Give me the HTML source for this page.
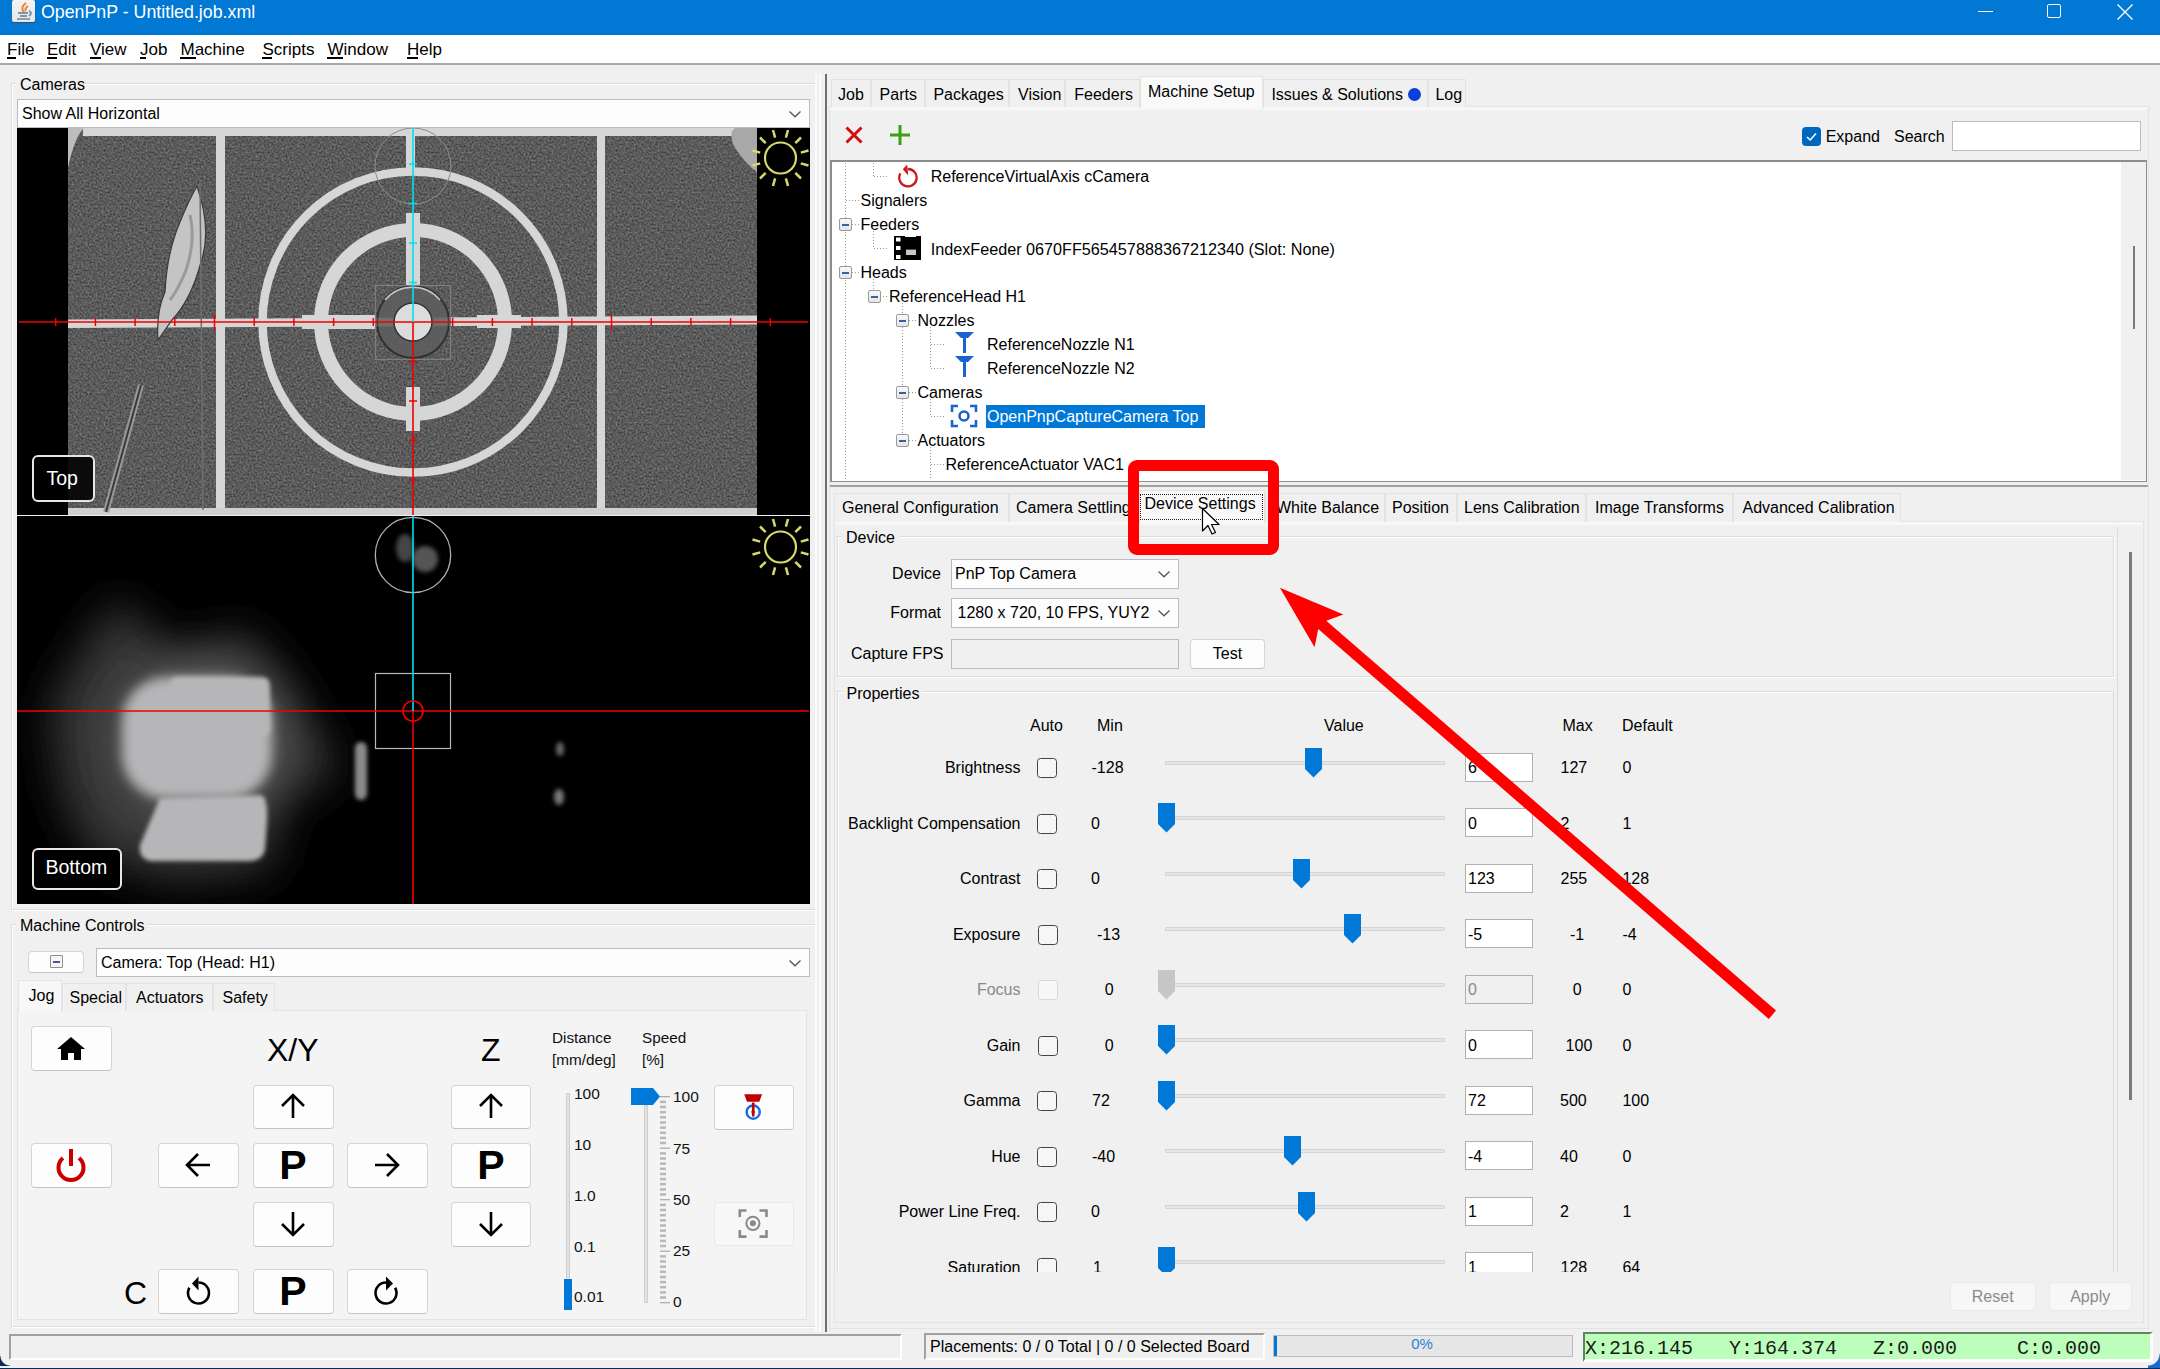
<!DOCTYPE html>
<html><head><meta charset="utf-8"><title>OpenPnP</title>
<style>
html,body{margin:0;padding:0;width:2160px;height:1369px;overflow:hidden;background:#0b2a55;}
#root{position:relative;width:2160px;height:1369px;overflow:hidden;font-family:"Liberation Sans",sans-serif;}
#root>div,#root>svg{position:absolute;box-sizing:border-box;}
</style></head><body><div id="root">
<div style="left:0px;top:0px;width:2160px;height:35px;background:#0078d4;"></div>
<div style="left:12px;top:0px;width:23px;height:22px;background:linear-gradient(#f4f4f4,#e6e6e6);border-radius:2px;box-shadow:0 1px 1px #3a4a5a;"></div>
<svg style="left:12px;top:0px;" width="24" height="22" viewBox="0 0 24 22"><path d="M14 3 C10 6 9 9 12 12 M16 6 C13 8 13 10 14 11" stroke="#e8882a" stroke-width="2" fill="none"/><rect x="6" y="12" width="10" height="2" fill="#7d95ab"/><rect x="8" y="15" width="7" height="2" fill="#7d95ab"/><rect x="5" y="18" width="13" height="2" fill="#8aa0b4"/><path d="M17 11 q4 2 0 5" stroke="#7d95ab" stroke-width="2" fill="none"/></svg>
<div style="left:41px;top:3.93px;font-size:17.8px;line-height:17.8px;color:#fff;font-weight:normal;font-family:'Liberation Sans',sans-serif;white-space:pre;">OpenPnP - Untitled.job.xml</div>
<div style="left:1978px;top:11px;width:15px;height:1px;background:#fff;"></div>
<div style="left:2047px;top:4px;width:14px;height:14px;border:1.3px solid #fff;border-radius:2px;box-sizing:border-box;"></div>
<svg style="left:2116px;top:3px;" width="18" height="18" viewBox="0 0 18 18"><path d="M1.5 1.5 L16.5 16.5 M16.5 1.5 L1.5 16.5" stroke="#fff" stroke-width="1.4"/></svg>
<div style="left:0px;top:35px;width:2160px;height:29px;background:#fff;"></div>
<div style="left:0px;top:63px;width:2160px;height:2px;background:#a9a9a9;"></div>
<div style="left:7px;top:40.61px;font-size:17px;line-height:17px;color:#000;font-weight:normal;font-family:'Liberation Sans',sans-serif;white-space:pre;">File</div>
<div style="left:6.5px;top:57px;width:9px;height:2px;background:#000;"></div>
<div style="left:47px;top:40.61px;font-size:17px;line-height:17px;color:#000;font-weight:normal;font-family:'Liberation Sans',sans-serif;white-space:pre;">Edit</div>
<div style="left:46.5px;top:57px;width:10px;height:2px;background:#000;"></div>
<div style="left:90px;top:40.61px;font-size:17px;line-height:17px;color:#000;font-weight:normal;font-family:'Liberation Sans',sans-serif;white-space:pre;">View</div>
<div style="left:89.5px;top:57px;width:11px;height:2px;background:#000;"></div>
<div style="left:140px;top:40.61px;font-size:17px;line-height:17px;color:#000;font-weight:normal;font-family:'Liberation Sans',sans-serif;white-space:pre;">Job</div>
<div style="left:139.5px;top:57px;width:6px;height:2px;background:#000;"></div>
<div style="left:180.5px;top:40.61px;font-size:17px;line-height:17px;color:#000;font-weight:normal;font-family:'Liberation Sans',sans-serif;white-space:pre;">Machine</div>
<div style="left:180.0px;top:57px;width:16px;height:2px;background:#000;"></div>
<div style="left:262.5px;top:40.61px;font-size:17px;line-height:17px;color:#000;font-weight:normal;font-family:'Liberation Sans',sans-serif;white-space:pre;">Scripts</div>
<div style="left:262.0px;top:57px;width:10px;height:2px;background:#000;"></div>
<div style="left:327.5px;top:40.61px;font-size:17px;line-height:17px;color:#000;font-weight:normal;font-family:'Liberation Sans',sans-serif;white-space:pre;">Window</div>
<div style="left:327.0px;top:57px;width:16px;height:2px;background:#000;"></div>
<div style="left:407px;top:40.61px;font-size:17px;line-height:17px;color:#000;font-weight:normal;font-family:'Liberation Sans',sans-serif;white-space:pre;">Help</div>
<div style="left:406.5px;top:57px;width:11px;height:2px;background:#000;"></div>
<div style="left:0px;top:65px;width:2160px;height:1304px;background:#f0f0f0;"></div>
<div style="left:11px;top:83px;width:805px;height:827px;border:1px solid #dcdcdc;box-shadow:1px 1px 0 #fff inset, 1px 1px 0 #fff;"></div>
<div style="left:16px;top:80px;width:68px;height:6px;background:#f0f0f0;"></div>
<div style="left:20px;top:77.46px;font-size:16px;line-height:16px;color:#000;font-weight:normal;font-family:'Liberation Sans',sans-serif;white-space:pre;">Cameras</div>
<div style="left:17px;top:99px;width:793px;height:29px;background:#fdfdfd;border:1px solid #b9bcc2;"></div>
<div style="left:22px;top:106.46px;font-size:16px;line-height:16px;color:#000;font-weight:normal;font-family:'Liberation Sans',sans-serif;white-space:pre;">Show All Horizontal</div>
<svg style="left:788px;top:109.5px;" width="14" height="9" viewBox="0 0 14 9"><path d="M1.5 1.5 L7 6.8 L12.5 1.5" stroke="#555" stroke-width="1.3" fill="none"/></svg>
<svg style="left:17px;top:128px;" width="793" height="387" viewBox="0 0 793 387"><defs>
<filter id="noise" x="0" y="0" width="100%" height="100%" color-interpolation-filters="sRGB"><feTurbulence type="fractalNoise" baseFrequency="0.5" numOctaves="2" seed="7"/><feColorMatrix type="matrix" values="0.4 0 0 0 0.155  0.4 0 0 0 0.155  0.4 0 0 0 0.155  0 0 0 0 1"/></filter>
</defs>
<rect x="0" y="0" width="793" height="387" fill="#000"/>
<rect x="51" y="0" width="689" height="387" fill="#5a5a5a"/>
<g transform="translate(-17,-128)">
<rect x="68" y="128" width="689" height="387" fill="#5a5a5a" filter="url(#noise)"/>
<rect x="83" y="128" width="662" height="8" fill="#d6d6d6"/>
<path d="M68 128 h16 q-10 10 -16 40 z" fill="#bdbdbd"/>
<path d="M757 128 h-22 q-6 4 -2 16 q10 18 24 28 z" fill="#a8a8a8"/>
<rect x="216" y="134" width="9" height="376" fill="#d6d6d6"/>
<rect x="597" y="134" width="8" height="376" fill="#d6d6d6"/>
<polygon points="68,319.5 757,315.5 757,324.5 68,328" fill="#d6d6d6"/>
<rect x="68" y="508" width="689" height="7" fill="#cfcfcf"/>
<circle cx="413" cy="322" r="150.5" stroke="#d6d6d6" stroke-width="8.5" fill="none"/>
<rect x="406" y="128" width="9" height="40" fill="#d6d6d6"/>
<circle cx="413" cy="322" r="92" stroke="#d6d6d6" stroke-width="14" fill="none"/>
<circle cx="413" cy="322" r="139" fill="none"/>
<rect x="302" y="315" width="73" height="14" fill="#d6d6d6"/>
<rect x="477" y="315" width="44" height="13" fill="#d6d6d6"/>
<rect x="406" y="213" width="14" height="72" fill="#d6d6d6"/>
<rect x="406" y="387" width="14" height="44" fill="#d6d6d6"/>
<circle cx="413" cy="322" r="36" fill="#5e5e5e" stroke="#2a2a2a" stroke-width="2" opacity="0.85"/><path d="M385 300 A36 36 0 0 1 440 300" stroke="#c8c8c8" stroke-width="1.5" fill="none"/>
<circle cx="413" cy="322" r="19" fill="#dcdcdc" stroke="#333" stroke-width="1.5"/>
<path d="M197 186 Q212 230 201 262 Q191 300 172 320 L158 340 Q156 312 165 292 Q167 252 180 222 Q189 200 197 186 Z" fill="#c4c4c4" stroke="#3a3a3a" stroke-width="1.2"/><path d="M190 215 Q196 240 186 270 Q178 290 170 300" stroke="#9a9a9a" stroke-width="3" fill="none"/><line x1="200" y1="180" x2="203" y2="510" stroke="#6e6e6e" stroke-width="1.5"/>
<line x1="141" y1="385" x2="106" y2="512" stroke="#9a9a9a" stroke-width="6"/><line x1="141" y1="385" x2="106" y2="512" stroke="#3a3a3a" stroke-width="2"/>
<rect x="375.5" y="285.5" width="75" height="74" stroke="#7e7e7e" stroke-width="1.2" fill="none"/>
<circle cx="413" cy="166" r="38" stroke="#8c8c8c" stroke-width="1" fill="none"/>
<line x1="19" y1="322" x2="808" y2="322" stroke="#f00000" stroke-width="1.6"/>
<line x1="55.7" y1="318" x2="55.7" y2="326" stroke="#f00000" stroke-width="1.5"/><line x1="95.4" y1="318" x2="95.4" y2="326" stroke="#f00000" stroke-width="1.5"/><line x1="135.1" y1="318" x2="135.1" y2="326" stroke="#f00000" stroke-width="1.5"/><line x1="174.8" y1="318" x2="174.8" y2="326" stroke="#f00000" stroke-width="1.5"/><line x1="214.5" y1="314" x2="214.5" y2="330" stroke="#f00000" stroke-width="1.5"/><line x1="254.2" y1="318" x2="254.2" y2="326" stroke="#f00000" stroke-width="1.5"/><line x1="293.9" y1="318" x2="293.9" y2="326" stroke="#f00000" stroke-width="1.5"/><line x1="333.6" y1="318" x2="333.6" y2="326" stroke="#f00000" stroke-width="1.5"/><line x1="373.3" y1="318" x2="373.3" y2="326" stroke="#f00000" stroke-width="1.5"/><line x1="452.7" y1="318" x2="452.7" y2="326" stroke="#f00000" stroke-width="1.5"/><line x1="492.4" y1="318" x2="492.4" y2="326" stroke="#f00000" stroke-width="1.5"/><line x1="532.1" y1="318" x2="532.1" y2="326" stroke="#f00000" stroke-width="1.5"/><line x1="571.8" y1="318" x2="571.8" y2="326" stroke="#f00000" stroke-width="1.5"/><line x1="611.5" y1="314" x2="611.5" y2="330" stroke="#f00000" stroke-width="1.5"/><line x1="651.2" y1="318" x2="651.2" y2="326" stroke="#f00000" stroke-width="1.5"/><line x1="690.9" y1="318" x2="690.9" y2="326" stroke="#f00000" stroke-width="1.5"/><line x1="730.6" y1="318" x2="730.6" y2="326" stroke="#f00000" stroke-width="1.5"/><line x1="770.3" y1="318" x2="770.3" y2="326" stroke="#f00000" stroke-width="1.5"/>
<line x1="413" y1="128" x2="413" y2="322" stroke="#00e0f0" stroke-width="1.6"/>
<line x1="413" y1="322" x2="413" y2="515" stroke="#f00000" stroke-width="1.6"/>
<line x1="409" y1="282.5" x2="417" y2="282.5" stroke="#00e0f0" stroke-width="1.5"/><line x1="409" y1="361.5" x2="417" y2="361.5" stroke="#f00000" stroke-width="1.5"/><line x1="409" y1="243.0" x2="417" y2="243.0" stroke="#00e0f0" stroke-width="1.5"/><line x1="409" y1="401.0" x2="417" y2="401.0" stroke="#f00000" stroke-width="1.5"/><line x1="409" y1="203.5" x2="417" y2="203.5" stroke="#00e0f0" stroke-width="1.5"/><line x1="409" y1="440.5" x2="417" y2="440.5" stroke="#f00000" stroke-width="1.5"/><line x1="409" y1="164.0" x2="417" y2="164.0" stroke="#00e0f0" stroke-width="1.5"/><line x1="409" y1="480.0" x2="417" y2="480.0" stroke="#f00000" stroke-width="1.5"/><circle cx="780.5" cy="158" r="15.5" stroke="#d9d96a" stroke-width="2.2" fill="none"/><line x1="800.8" y1="163.4" x2="808.5" y2="165.5" stroke="#d9d96a" stroke-width="2.5"/><line x1="795.3" y1="172.8" x2="801.0" y2="178.5" stroke="#d9d96a" stroke-width="2.5"/><line x1="785.9" y1="178.3" x2="788.0" y2="186.0" stroke="#d9d96a" stroke-width="2.5"/><line x1="775.1" y1="178.3" x2="773.0" y2="186.0" stroke="#d9d96a" stroke-width="2.5"/><line x1="765.7" y1="172.8" x2="760.0" y2="178.5" stroke="#d9d96a" stroke-width="2.5"/><line x1="760.2" y1="163.4" x2="752.5" y2="165.5" stroke="#d9d96a" stroke-width="2.5"/><line x1="760.2" y1="152.6" x2="752.5" y2="150.5" stroke="#d9d96a" stroke-width="2.5"/><line x1="765.7" y1="143.2" x2="760.0" y2="137.5" stroke="#d9d96a" stroke-width="2.5"/><line x1="775.1" y1="137.7" x2="773.0" y2="130.0" stroke="#d9d96a" stroke-width="2.5"/><line x1="785.9" y1="137.7" x2="788.0" y2="130.0" stroke="#d9d96a" stroke-width="2.5"/><line x1="795.3" y1="143.2" x2="801.0" y2="137.5" stroke="#d9d96a" stroke-width="2.5"/><line x1="800.8" y1="152.6" x2="808.5" y2="150.5" stroke="#d9d96a" stroke-width="2.5"/></g></svg>
<div style="left:32px;top:455px;width:63px;height:47px;border:2px solid #e6e6e6;border-radius:6px;background:rgba(0,0,0,0.88);"></div>
<div style="left:46.5px;top:468.99px;font-size:19.5px;line-height:19.5px;color:#fff;font-weight:normal;font-family:'Liberation Sans',sans-serif;white-space:pre;">Top</div>
<svg style="left:17px;top:516px;" width="793" height="388" viewBox="0 0 793 388"><defs>
<filter id="blur1" x="-50%" y="-50%" width="200%" height="200%"><feGaussianBlur stdDeviation="22"/></filter>
<filter id="blur2" x="-50%" y="-50%" width="200%" height="200%"><feGaussianBlur stdDeviation="6"/></filter>
<filter id="blur3" x="-50%" y="-50%" width="200%" height="200%"><feGaussianBlur stdDeviation="2"/></filter>
</defs>
<rect x="0" y="0" width="793" height="388" fill="#000"/>
<g transform="translate(-17,-516)">
<path d="M116 600 L180 655 L240 630 L280 670 L310 720 L340 771 L285 800 L268 870 L170 880 L90 855 L60 790 L50 705 L80 655 Z" fill="#383838" filter="url(#blur1)"/>
<ellipse cx="200" cy="740" rx="85" ry="80" fill="#585858" filter="url(#blur1)"/>
<rect x="122" y="677" width="150" height="122" rx="45" fill="#b6b6b8" filter="url(#blur2)"/>
<rect x="170" y="677" width="100" height="60" rx="8" fill="#b6b6b8" filter="url(#blur3)"/>
<path d="M160 798 L262 795 Q268 800 267 820 L265 850 Q262 861 250 861 L150 861 Q138 858 140 845 Z" fill="#b6b6b8" filter="url(#blur3)"/>
<rect x="355" y="742" width="12" height="58" rx="6" fill="#8a8a8a" filter="url(#blur3)"/>
<ellipse cx="560" cy="749" rx="4" ry="7" fill="#666" filter="url(#blur3)"/>
<ellipse cx="559" cy="797" rx="5" ry="8" fill="#777" filter="url(#blur3)"/>
<ellipse cx="405" cy="548" rx="9" ry="14" fill="#444" filter="url(#blur3)"/>
<ellipse cx="425" cy="559" rx="13" ry="13" fill="#555" filter="url(#blur3)"/>
<circle cx="413" cy="555" r="37.7" stroke="#b0b0b0" stroke-width="1.3" fill="none"/>
<rect x="375.5" y="673.5" width="75" height="75" stroke="#b8b8b8" stroke-width="1.2" fill="none"/>
<line x1="17" y1="711" x2="809" y2="711" stroke="#f00000" stroke-width="1.6"/>
<line x1="413" y1="516" x2="413" y2="711" stroke="#00e0f0" stroke-width="1.6"/>
<line x1="413" y1="711" x2="413" y2="904" stroke="#f00000" stroke-width="1.6"/>
<circle cx="413" cy="711" r="10" stroke="#f00000" stroke-width="1.6" fill="none"/>
<circle cx="780.5" cy="547" r="15.5" stroke="#d9d96a" stroke-width="2.2" fill="none"/><line x1="800.8" y1="552.4" x2="808.5" y2="554.5" stroke="#d9d96a" stroke-width="2.5"/><line x1="795.3" y1="561.8" x2="801.0" y2="567.5" stroke="#d9d96a" stroke-width="2.5"/><line x1="785.9" y1="567.3" x2="788.0" y2="575.0" stroke="#d9d96a" stroke-width="2.5"/><line x1="775.1" y1="567.3" x2="773.0" y2="575.0" stroke="#d9d96a" stroke-width="2.5"/><line x1="765.7" y1="561.8" x2="760.0" y2="567.5" stroke="#d9d96a" stroke-width="2.5"/><line x1="760.2" y1="552.4" x2="752.5" y2="554.5" stroke="#d9d96a" stroke-width="2.5"/><line x1="760.2" y1="541.6" x2="752.5" y2="539.5" stroke="#d9d96a" stroke-width="2.5"/><line x1="765.7" y1="532.2" x2="760.0" y2="526.5" stroke="#d9d96a" stroke-width="2.5"/><line x1="775.1" y1="526.7" x2="773.0" y2="519.0" stroke="#d9d96a" stroke-width="2.5"/><line x1="785.9" y1="526.7" x2="788.0" y2="519.0" stroke="#d9d96a" stroke-width="2.5"/><line x1="795.3" y1="532.2" x2="801.0" y2="526.5" stroke="#d9d96a" stroke-width="2.5"/><line x1="800.8" y1="541.6" x2="808.5" y2="539.5" stroke="#d9d96a" stroke-width="2.5"/>
</g></svg>
<div style="left:31.5px;top:848px;width:90px;height:42px;border:2px solid #e6e6e6;border-radius:6px;background:#000;"></div>
<div style="left:45.5px;top:858.49px;font-size:19.5px;line-height:19.5px;color:#fff;font-weight:normal;font-family:'Liberation Sans',sans-serif;white-space:pre;">Bottom</div>
<div style="left:11px;top:924px;width:805px;height:403px;border:1px solid #dcdcdc;box-shadow:1px 1px 0 #fff inset, 1px 1px 0 #fff;"></div>
<div style="left:16px;top:921px;width:131px;height:6px;background:#f0f0f0;"></div>
<div style="left:20px;top:918.46px;font-size:16px;line-height:16px;color:#000;font-weight:normal;font-family:'Liberation Sans',sans-serif;white-space:pre;">Machine Controls</div>
<div style="left:28px;top:951px;width:56px;height:22px;background:#fdfdfd;border:1px solid #d5d5d5;border-bottom-color:#c4c4c4;border-radius:4px;"></div>
<div style="left:50px;top:955px;width:13px;height:13px;border:1px solid #8e8e8e;border-radius:1px;background:#f6f6f6;"></div>
<div style="left:53px;top:961px;width:7px;height:1.5px;background:#4a5a8a;"></div>
<div style="left:96px;top:948px;width:714px;height:29px;background:#fdfdfd;border:1px solid #b9bcc2;"></div>
<div style="left:101px;top:954.96px;font-size:16px;line-height:16px;color:#000;font-weight:normal;font-family:'Liberation Sans',sans-serif;white-space:pre;">Camera: Top (Head: H1)</div>
<svg style="left:788px;top:958.5px;" width="14" height="9" viewBox="0 0 14 9"><path d="M1.5 1.5 L7 6.8 L12.5 1.5" stroke="#555" stroke-width="1.3" fill="none"/></svg>
<div style="left:17px;top:1010px;width:790px;height:310px;background:#f4f4f4;border:1px solid #e3e3e3;"></div>
<div style="left:62px;top:983px;width:64px;height:28px;background:#f0f0f0;border:1px solid #e3e3e3;border-bottom:none;"></div>
<div style="left:69.5px;top:989.96px;font-size:16px;line-height:16px;color:#000;font-weight:normal;font-family:'Liberation Sans',sans-serif;white-space:pre;">Special</div>
<div style="left:126px;top:983px;width:87px;height:28px;background:#f0f0f0;border:1px solid #e3e3e3;border-bottom:none;"></div>
<div style="left:136px;top:989.96px;font-size:16px;line-height:16px;color:#000;font-weight:normal;font-family:'Liberation Sans',sans-serif;white-space:pre;">Actuators</div>
<div style="left:213px;top:983px;width:62px;height:28px;background:#f0f0f0;border:1px solid #e3e3e3;border-bottom:none;"></div>
<div style="left:222.5px;top:989.96px;font-size:16px;line-height:16px;color:#000;font-weight:normal;font-family:'Liberation Sans',sans-serif;white-space:pre;">Safety</div>
<div style="left:18px;top:980px;width:44px;height:32px;background:#f7f7f7;border:1px solid #e3e3e3;border-bottom:none;"></div>
<div style="left:28.5px;top:988.46px;font-size:16px;line-height:16px;color:#000;font-weight:normal;font-family:'Liberation Sans',sans-serif;white-space:pre;">Jog</div>
<div style="left:30.5px;top:1026px;width:81.0px;height:45px;background:#fdfdfd;border:1px solid #d5d5d5;border-bottom-color:#c4c4c4;border-radius:4px;"></div>
<div style="left:253px;top:1085px;width:80.5px;height:44px;background:#fdfdfd;border:1px solid #d5d5d5;border-bottom-color:#c4c4c4;border-radius:4px;"></div>
<div style="left:451px;top:1085px;width:80px;height:44px;background:#fdfdfd;border:1px solid #d5d5d5;border-bottom-color:#c4c4c4;border-radius:4px;"></div>
<div style="left:30.5px;top:1143px;width:81.0px;height:45px;background:#fdfdfd;border:1px solid #d5d5d5;border-bottom-color:#c4c4c4;border-radius:4px;"></div>
<div style="left:158px;top:1143px;width:81px;height:45px;background:#fdfdfd;border:1px solid #d5d5d5;border-bottom-color:#c4c4c4;border-radius:4px;"></div>
<div style="left:253px;top:1143px;width:80.5px;height:45px;background:#fdfdfd;border:1px solid #d5d5d5;border-bottom-color:#c4c4c4;border-radius:4px;"></div>
<div style="left:347px;top:1143px;width:81px;height:45px;background:#fdfdfd;border:1px solid #d5d5d5;border-bottom-color:#c4c4c4;border-radius:4px;"></div>
<div style="left:451px;top:1143px;width:80px;height:45px;background:#fdfdfd;border:1px solid #d5d5d5;border-bottom-color:#c4c4c4;border-radius:4px;"></div>
<div style="left:253px;top:1202px;width:80.5px;height:45px;background:#fdfdfd;border:1px solid #d5d5d5;border-bottom-color:#c4c4c4;border-radius:4px;"></div>
<div style="left:451px;top:1202px;width:80px;height:45px;background:#fdfdfd;border:1px solid #d5d5d5;border-bottom-color:#c4c4c4;border-radius:4px;"></div>
<div style="left:158px;top:1269px;width:81px;height:45px;background:#fdfdfd;border:1px solid #d5d5d5;border-bottom-color:#c4c4c4;border-radius:4px;"></div>
<div style="left:253px;top:1269px;width:80.5px;height:45px;background:#fdfdfd;border:1px solid #d5d5d5;border-bottom-color:#c4c4c4;border-radius:4px;"></div>
<div style="left:347px;top:1269px;width:81px;height:45px;background:#fdfdfd;border:1px solid #d5d5d5;border-bottom-color:#c4c4c4;border-radius:4px;"></div>
<div style="left:713.6px;top:1084.6px;width:80.39999999999998px;height:45.0px;background:#fdfdfd;border:1px solid #d5d5d5;border-bottom-color:#c4c4c4;border-radius:4px;"></div>
<div style="left:713.6px;top:1202px;width:80.39999999999998px;height:44px;background:#f7f7f7;border:1px solid #e9e9e9;border-radius:4px;"></div>
<div style="left:267px;top:1033.91px;font-size:32px;line-height:32px;color:#000;font-weight:normal;font-family:'Liberation Sans',sans-serif;white-space:pre;">X/Y</div>
<div style="left:481px;top:1033.91px;font-size:32px;line-height:32px;color:#000;font-weight:normal;font-family:'Liberation Sans',sans-serif;white-space:pre;">Z</div>
<div style="left:124px;top:1276.91px;font-size:32px;line-height:32px;color:#000;font-weight:normal;font-family:'Liberation Sans',sans-serif;white-space:pre;">C</div>
<div style="left:-7px;width:600px;text-align:center;top:1145.29px;font-size:41px;line-height:41px;color:#000;font-weight:bold;font-family:'Liberation Sans',sans-serif;white-space:pre;">P</div>
<div style="left:191px;width:600px;text-align:center;top:1145.29px;font-size:41px;line-height:41px;color:#000;font-weight:bold;font-family:'Liberation Sans',sans-serif;white-space:pre;">P</div>
<div style="left:-7px;width:600px;text-align:center;top:1271.29px;font-size:41px;line-height:41px;color:#000;font-weight:bold;font-family:'Liberation Sans',sans-serif;white-space:pre;">P</div>
<svg style="left:0px;top:0px;pointer-events:none;" width="820" height="1369" viewBox="0 0 820 1369"><path d="M293 1118 V1095 M282 1106 L293 1095 L304 1106" stroke="#000" stroke-width="2.6" fill="none" stroke-linejoin="miter"/><path d="M491 1118 V1095 M480 1106 L491 1095 L502 1106" stroke="#000" stroke-width="2.6" fill="none" stroke-linejoin="miter"/><path d="M293 1212 V1235 M282 1224 L293 1235 L304 1224" stroke="#000" stroke-width="2.6" fill="none" stroke-linejoin="miter"/><path d="M491 1212 V1235 M480 1224 L491 1235 L502 1224" stroke="#000" stroke-width="2.6" fill="none" stroke-linejoin="miter"/><path d="M210 1165 H187 M198 1154 L187 1165 L198 1176" stroke="#000" stroke-width="2.6" fill="none" stroke-linejoin="miter"/><path d="M375 1165 H398 M387 1154 L398 1165 L387 1176" stroke="#000" stroke-width="2.6" fill="none" stroke-linejoin="miter"/></svg>
<svg style="left:55px;top:1034px;" width="32" height="28" viewBox="0 0 32 28"><path d="M16 3 L2 15 H6 V26 H13 V19 H19 V26 H26 V15 H30 Z" fill="#000"/></svg>
<svg style="left:52px;top:1146px;" width="38" height="40" viewBox="0 0 38 40"><path d="M11 12 A 12.5 12.5 0 1 0 27 12" stroke="#c80000" stroke-width="4" fill="none"/><line x1="19" y1="3" x2="19" y2="20" stroke="#c80000" stroke-width="4"/></svg>
<svg style="left:183px;top:1275px;" width="32" height="32" viewBox="0 0 32 32"><path d="M15.5 7.5 A10.5 10.5 0 1 1 6.4 12.75" stroke="#000" stroke-width="2.6" fill="none"/><path d="M9 8.6 L15.5 1.5 L15.5 15.5 Z" fill="#000"/></svg>
<svg style="left:372px;top:1275px;" width="32" height="32" viewBox="0 0 32 32"><path d="M14 7.5 A10.5 10.5 0 1 0 23.1 12.75" stroke="#000" stroke-width="2.6" fill="none"/><path d="M21 8.6 L14 1.5 L14 15.5 Z" fill="#000"/></svg>
<svg style="left:740px;top:1090px;" width="28" height="34" viewBox="0 0 28 34"><path d="M4.2 4.3 H22.1 L19.3 11.7 H7 Z" fill="#c00000"/><circle cx="13.2" cy="22.1" r="6.6" stroke="#1a6ae0" stroke-width="2.4" fill="none"/><circle cx="13.2" cy="22.1" r="2" fill="#1a6ae0"/><line x1="13.2" y1="12.5" x2="13.2" y2="26.5" stroke="#c00000" stroke-width="2.6"/></svg>
<svg style="left:737px;top:1206px;" width="32" height="32" viewBox="0 0 32 32"><path d="M2.8 11 V4.5 H9.5 M22.5 4.5 H29.5 V11 M29.5 24 V30.6 H22.5 M9.5 30.6 H2.8 V24" stroke="#8a8a8a" stroke-width="2.6" fill="none"/><circle cx="15.9" cy="17.3" r="6.6" stroke="#8a8a8a" stroke-width="2" fill="none"/><circle cx="15.9" cy="17.3" r="3" fill="#8a8a8a"/></svg>
<div style="left:552px;top:1030.05px;font-size:15.3px;line-height:15.3px;color:#111;font-weight:normal;font-family:'Liberation Sans',sans-serif;white-space:pre;">Distance</div>
<div style="left:552px;top:1052.05px;font-size:15.3px;line-height:15.3px;color:#111;font-weight:normal;font-family:'Liberation Sans',sans-serif;white-space:pre;">[mm/deg]</div>
<div style="left:642px;top:1030.05px;font-size:15.3px;line-height:15.3px;color:#111;font-weight:normal;font-family:'Liberation Sans',sans-serif;white-space:pre;">Speed</div>
<div style="left:642px;top:1052.05px;font-size:15.3px;line-height:15.3px;color:#111;font-weight:normal;font-family:'Liberation Sans',sans-serif;white-space:pre;">[%]</div>
<div style="left:566px;top:1093px;width:4px;height:214px;background:#e2e2e2;border:1px solid #cfcfcf;"></div>
<div style="left:564px;top:1279px;width:8px;height:31px;background:#0078d7;"></div>
<div style="left:574px;top:1085.88px;font-size:15.5px;line-height:15.5px;color:#111;font-weight:normal;font-family:'Liberation Sans',sans-serif;white-space:pre;">100</div>
<div style="left:574px;top:1136.88px;font-size:15.5px;line-height:15.5px;color:#111;font-weight:normal;font-family:'Liberation Sans',sans-serif;white-space:pre;">10</div>
<div style="left:574px;top:1187.88px;font-size:15.5px;line-height:15.5px;color:#111;font-weight:normal;font-family:'Liberation Sans',sans-serif;white-space:pre;">1.0</div>
<div style="left:574px;top:1238.88px;font-size:15.5px;line-height:15.5px;color:#111;font-weight:normal;font-family:'Liberation Sans',sans-serif;white-space:pre;">0.1</div>
<div style="left:574px;top:1288.88px;font-size:15.5px;line-height:15.5px;color:#111;font-weight:normal;font-family:'Liberation Sans',sans-serif;white-space:pre;">0.01</div>
<div style="left:644px;top:1105px;width:4px;height:198px;background:#e2e2e2;border:1px solid #cfcfcf;"></div>
<svg style="left:631px;top:1088px;" width="30" height="17" viewBox="0 0 30 17"><path d="M0 0 H22 L29 8.5 L22 17 H0 Z" fill="#0078d7"/></svg>
<svg style="left:0px;top:0px;" width="820" height="1369" viewBox="0 0 820 1369"><line x1="660" y1="1096.7" x2="670" y2="1096.7" stroke="#a8a8a8" stroke-width="1.2"/><line x1="660" y1="1101.9" x2="666" y2="1101.9" stroke="#b8b8b8" stroke-width="2.5"/><line x1="660" y1="1107.0" x2="666" y2="1107.0" stroke="#b8b8b8" stroke-width="2.5"/><line x1="660" y1="1112.2" x2="666" y2="1112.2" stroke="#b8b8b8" stroke-width="2.5"/><line x1="660" y1="1117.3" x2="666" y2="1117.3" stroke="#b8b8b8" stroke-width="2.5"/><line x1="660" y1="1122.5" x2="666" y2="1122.5" stroke="#b8b8b8" stroke-width="2.5"/><line x1="660" y1="1127.6" x2="666" y2="1127.6" stroke="#b8b8b8" stroke-width="2.5"/><line x1="660" y1="1132.8" x2="666" y2="1132.8" stroke="#b8b8b8" stroke-width="2.5"/><line x1="660" y1="1137.9" x2="666" y2="1137.9" stroke="#b8b8b8" stroke-width="2.5"/><line x1="660" y1="1143.0" x2="666" y2="1143.0" stroke="#b8b8b8" stroke-width="2.5"/><line x1="660" y1="1148.2" x2="670" y2="1148.2" stroke="#a8a8a8" stroke-width="1.2"/><line x1="660" y1="1153.4" x2="666" y2="1153.4" stroke="#b8b8b8" stroke-width="2.5"/><line x1="660" y1="1158.5" x2="666" y2="1158.5" stroke="#b8b8b8" stroke-width="2.5"/><line x1="660" y1="1163.7" x2="666" y2="1163.7" stroke="#b8b8b8" stroke-width="2.5"/><line x1="660" y1="1168.8" x2="666" y2="1168.8" stroke="#b8b8b8" stroke-width="2.5"/><line x1="660" y1="1174.0" x2="666" y2="1174.0" stroke="#b8b8b8" stroke-width="2.5"/><line x1="660" y1="1179.1" x2="666" y2="1179.1" stroke="#b8b8b8" stroke-width="2.5"/><line x1="660" y1="1184.2" x2="666" y2="1184.2" stroke="#b8b8b8" stroke-width="2.5"/><line x1="660" y1="1189.4" x2="666" y2="1189.4" stroke="#b8b8b8" stroke-width="2.5"/><line x1="660" y1="1194.5" x2="666" y2="1194.5" stroke="#b8b8b8" stroke-width="2.5"/><line x1="660" y1="1199.7" x2="670" y2="1199.7" stroke="#a8a8a8" stroke-width="1.2"/><line x1="660" y1="1204.9" x2="666" y2="1204.9" stroke="#b8b8b8" stroke-width="2.5"/><line x1="660" y1="1210.0" x2="666" y2="1210.0" stroke="#b8b8b8" stroke-width="2.5"/><line x1="660" y1="1215.2" x2="666" y2="1215.2" stroke="#b8b8b8" stroke-width="2.5"/><line x1="660" y1="1220.3" x2="666" y2="1220.3" stroke="#b8b8b8" stroke-width="2.5"/><line x1="660" y1="1225.5" x2="666" y2="1225.5" stroke="#b8b8b8" stroke-width="2.5"/><line x1="660" y1="1230.6" x2="666" y2="1230.6" stroke="#b8b8b8" stroke-width="2.5"/><line x1="660" y1="1235.8" x2="666" y2="1235.8" stroke="#b8b8b8" stroke-width="2.5"/><line x1="660" y1="1240.9" x2="666" y2="1240.9" stroke="#b8b8b8" stroke-width="2.5"/><line x1="660" y1="1246.0" x2="666" y2="1246.0" stroke="#b8b8b8" stroke-width="2.5"/><line x1="660" y1="1251.2" x2="670" y2="1251.2" stroke="#a8a8a8" stroke-width="1.2"/><line x1="660" y1="1256.4" x2="666" y2="1256.4" stroke="#b8b8b8" stroke-width="2.5"/><line x1="660" y1="1261.5" x2="666" y2="1261.5" stroke="#b8b8b8" stroke-width="2.5"/><line x1="660" y1="1266.7" x2="666" y2="1266.7" stroke="#b8b8b8" stroke-width="2.5"/><line x1="660" y1="1271.8" x2="666" y2="1271.8" stroke="#b8b8b8" stroke-width="2.5"/><line x1="660" y1="1277.0" x2="666" y2="1277.0" stroke="#b8b8b8" stroke-width="2.5"/><line x1="660" y1="1282.1" x2="666" y2="1282.1" stroke="#b8b8b8" stroke-width="2.5"/><line x1="660" y1="1287.2" x2="666" y2="1287.2" stroke="#b8b8b8" stroke-width="2.5"/><line x1="660" y1="1292.4" x2="666" y2="1292.4" stroke="#b8b8b8" stroke-width="2.5"/><line x1="660" y1="1297.5" x2="666" y2="1297.5" stroke="#b8b8b8" stroke-width="2.5"/><line x1="660" y1="1302.7" x2="670" y2="1302.7" stroke="#a8a8a8" stroke-width="1.2"/></svg>
<div style="left:673px;top:1088.88px;font-size:15.5px;line-height:15.5px;color:#111;font-weight:normal;font-family:'Liberation Sans',sans-serif;white-space:pre;">100</div>
<div style="left:673px;top:1140.88px;font-size:15.5px;line-height:15.5px;color:#111;font-weight:normal;font-family:'Liberation Sans',sans-serif;white-space:pre;">75</div>
<div style="left:673px;top:1191.88px;font-size:15.5px;line-height:15.5px;color:#111;font-weight:normal;font-family:'Liberation Sans',sans-serif;white-space:pre;">50</div>
<div style="left:673px;top:1242.88px;font-size:15.5px;line-height:15.5px;color:#111;font-weight:normal;font-family:'Liberation Sans',sans-serif;white-space:pre;">25</div>
<div style="left:673px;top:1293.88px;font-size:15.5px;line-height:15.5px;color:#111;font-weight:normal;font-family:'Liberation Sans',sans-serif;white-space:pre;">0</div>
<div style="left:815px;top:74px;width:2px;height:1258px;background:#fafafa;"></div>
<div style="left:819px;top:74px;width:2px;height:1258px;background:#fbfbfb;"></div>
<div style="left:824.5px;top:74px;width:2.5px;height:1258px;background:#6f6f6f;"></div>
<div style="left:829px;top:106px;width:1320px;height:1223px;border:1px solid #e3e3e3;background:#f0f0f0;"></div>
<div style="left:830px;top:107px;width:1318px;height:3px;background:#f7f7f7;"></div>
<div style="left:830.5px;top:79px;width:40.0px;height:28px;background:#f0f0f0;border:1px solid #e3e3e3;border-bottom:none;"></div>
<div style="left:838px;top:87.46px;font-size:16px;line-height:16px;color:#000;font-weight:normal;font-family:'Liberation Sans',sans-serif;white-space:pre;">Job</div>
<div style="left:870.5px;top:79px;width:54.299999999999955px;height:28px;background:#f0f0f0;border:1px solid #e3e3e3;border-bottom:none;"></div>
<div style="left:879.6px;top:87.46px;font-size:16px;line-height:16px;color:#000;font-weight:normal;font-family:'Liberation Sans',sans-serif;white-space:pre;">Parts</div>
<div style="left:924.8px;top:79px;width:83.90000000000009px;height:28px;background:#f0f0f0;border:1px solid #e3e3e3;border-bottom:none;"></div>
<div style="left:933.4px;top:87.46px;font-size:16px;line-height:16px;color:#000;font-weight:normal;font-family:'Liberation Sans',sans-serif;white-space:pre;">Packages</div>
<div style="left:1008.7px;top:79px;width:56.299999999999955px;height:28px;background:#f0f0f0;border:1px solid #e3e3e3;border-bottom:none;"></div>
<div style="left:1018px;top:87.46px;font-size:16px;line-height:16px;color:#000;font-weight:normal;font-family:'Liberation Sans',sans-serif;white-space:pre;">Vision</div>
<div style="left:1065px;top:79px;width:74.59999999999991px;height:28px;background:#f0f0f0;border:1px solid #e3e3e3;border-bottom:none;"></div>
<div style="left:1074.3px;top:87.46px;font-size:16px;line-height:16px;color:#000;font-weight:normal;font-family:'Liberation Sans',sans-serif;white-space:pre;">Feeders</div>
<div style="left:1263px;top:79px;width:165px;height:28px;background:#f0f0f0;border:1px solid #e3e3e3;border-bottom:none;"></div>
<div style="left:1271.4px;top:87.46px;font-size:16px;line-height:16px;color:#000;font-weight:normal;font-family:'Liberation Sans',sans-serif;white-space:pre;">Issues &amp; Solutions</div>
<div style="left:1428px;top:79px;width:37.5px;height:28px;background:#f0f0f0;border:1px solid #e3e3e3;border-bottom:none;"></div>
<div style="left:1435.4px;top:87.46px;font-size:16px;line-height:16px;color:#000;font-weight:normal;font-family:'Liberation Sans',sans-serif;white-space:pre;">Log</div>
<div style="left:1139.6px;top:76px;width:123.40000000000009px;height:32px;background:#f9f9f9;border:1px solid #e3e3e3;border-bottom:none;"></div>
<div style="left:1148px;top:83.96px;font-size:16px;line-height:16px;color:#000;font-weight:normal;font-family:'Liberation Sans',sans-serif;white-space:pre;">Machine Setup</div>
<div style="left:1407.5px;top:88px;width:13px;height:13px;background:#0a3fd8;border-radius:50%;"></div>
<svg style="left:844px;top:125px;" width="20" height="20" viewBox="0 0 20 20"><path d="M2.5 2.5 L17.5 17.5 M17.5 2.5 L2.5 17.5" stroke="#d01010" stroke-width="3"/></svg>
<svg style="left:888px;top:123px;" width="24" height="24" viewBox="0 0 24 24"><path d="M12 2 V22 M2 12 H22" stroke="#3ca010" stroke-width="3"/></svg>
<div style="left:1801.5px;top:126.5px;width:19px;height:19px;background:#0067c0;border-radius:4px;"></div>
<svg style="left:1801.5px;top:126.5px;" width="19" height="19" viewBox="0 0 19 19"><path d="M5 10 L8.2 13 L14 6.5" stroke="#fff" stroke-width="1.5" fill="none"/></svg>
<div style="left:1825.7px;top:129.46px;font-size:16px;line-height:16px;color:#000;font-weight:normal;font-family:'Liberation Sans',sans-serif;white-space:pre;">Expand</div>
<div style="left:1894px;top:129.46px;font-size:16px;line-height:16px;color:#000;font-weight:normal;font-family:'Liberation Sans',sans-serif;white-space:pre;">Search</div>
<div style="left:1951.5px;top:120.5px;width:189px;height:30px;background:#fff;border:1px solid #b9bcc2;"></div>
<div style="left:830px;top:160px;width:1317px;height:322px;background:#fff;border:2px solid #8c8c8c;border-right:1px solid #8c8c8c;border-bottom:1px solid #8c8c8c;"></div>
<div style="left:2121px;top:162px;width:25px;height:318px;background:#f0f0f0;"></div>
<div style="left:2132.5px;top:246px;width:2.5px;height:83px;background:#7a7a7a;"></div>
<svg style="left:0px;top:0px;" width="2160" height="500" viewBox="0 0 2160 500"><line x1="845.5" y1="163" x2="845.5" y2="479" stroke="#9a9a9a" stroke-width="1" stroke-dasharray="1 2"/><line x1="873.5" y1="163" x2="873.5" y2="176" stroke="#9a9a9a" stroke-width="1" stroke-dasharray="1 2"/><line x1="874" y1="176.5" x2="889" y2="176.5" stroke="#9a9a9a" stroke-width="1" stroke-dasharray="1 2"/><line x1="846" y1="200.5" x2="859" y2="200.5" stroke="#9a9a9a" stroke-width="1" stroke-dasharray="1 2"/><line x1="852" y1="224.5" x2="859" y2="224.5" stroke="#9a9a9a" stroke-width="1" stroke-dasharray="1 2"/><line x1="873.5" y1="231" x2="873.5" y2="248" stroke="#9a9a9a" stroke-width="1" stroke-dasharray="1 2"/><line x1="874" y1="248.5" x2="889" y2="248.5" stroke="#9a9a9a" stroke-width="1" stroke-dasharray="1 2"/><line x1="852" y1="272.5" x2="859" y2="272.5" stroke="#9a9a9a" stroke-width="1" stroke-dasharray="1 2"/><line x1="873.5" y1="279" x2="873.5" y2="289" stroke="#9a9a9a" stroke-width="1" stroke-dasharray="1 2"/><line x1="880" y1="296.5" x2="888" y2="296.5" stroke="#9a9a9a" stroke-width="1" stroke-dasharray="1 2"/><line x1="902.5" y1="303" x2="902.5" y2="313" stroke="#9a9a9a" stroke-width="1" stroke-dasharray="1 2"/><line x1="909" y1="320.5" x2="916" y2="320.5" stroke="#9a9a9a" stroke-width="1" stroke-dasharray="1 2"/><line x1="930.5" y1="327" x2="930.5" y2="368" stroke="#9a9a9a" stroke-width="1" stroke-dasharray="1 2"/><line x1="931" y1="344.5" x2="946" y2="344.5" stroke="#9a9a9a" stroke-width="1" stroke-dasharray="1 2"/><line x1="931" y1="368.5" x2="946" y2="368.5" stroke="#9a9a9a" stroke-width="1" stroke-dasharray="1 2"/><line x1="902.5" y1="327" x2="902.5" y2="433" stroke="#9a9a9a" stroke-width="1" stroke-dasharray="1 2"/><line x1="909" y1="392.5" x2="916" y2="392.5" stroke="#9a9a9a" stroke-width="1" stroke-dasharray="1 2"/><line x1="930.5" y1="399" x2="930.5" y2="416" stroke="#9a9a9a" stroke-width="1" stroke-dasharray="1 2"/><line x1="931" y1="416.5" x2="946" y2="416.5" stroke="#9a9a9a" stroke-width="1" stroke-dasharray="1 2"/><line x1="909" y1="440.5" x2="916" y2="440.5" stroke="#9a9a9a" stroke-width="1" stroke-dasharray="1 2"/><line x1="930.5" y1="447" x2="930.5" y2="479" stroke="#9a9a9a" stroke-width="1" stroke-dasharray="1 2"/><line x1="931" y1="464.5" x2="944" y2="464.5" stroke="#9a9a9a" stroke-width="1" stroke-dasharray="1 2"/></svg>
<div style="left:839px;top:218px;width:13px;height:13px;border:1px solid #9a9a9a;border-radius:2px;background:linear-gradient(#fafafa,#e4e4e4);"></div>
<div style="left:842px;top:224px;width:7px;height:1.5px;background:#3b5ba8;"></div>
<div style="left:839px;top:266px;width:13px;height:13px;border:1px solid #9a9a9a;border-radius:2px;background:linear-gradient(#fafafa,#e4e4e4);"></div>
<div style="left:842px;top:272px;width:7px;height:1.5px;background:#3b5ba8;"></div>
<div style="left:867.5px;top:290px;width:13px;height:13px;border:1px solid #9a9a9a;border-radius:2px;background:linear-gradient(#fafafa,#e4e4e4);"></div>
<div style="left:870.5px;top:296px;width:7px;height:1.5px;background:#3b5ba8;"></div>
<div style="left:896px;top:314px;width:13px;height:13px;border:1px solid #9a9a9a;border-radius:2px;background:linear-gradient(#fafafa,#e4e4e4);"></div>
<div style="left:899px;top:320px;width:7px;height:1.5px;background:#3b5ba8;"></div>
<div style="left:896px;top:386px;width:13px;height:13px;border:1px solid #9a9a9a;border-radius:2px;background:linear-gradient(#fafafa,#e4e4e4);"></div>
<div style="left:899px;top:392px;width:7px;height:1.5px;background:#3b5ba8;"></div>
<div style="left:896px;top:434px;width:13px;height:13px;border:1px solid #9a9a9a;border-radius:2px;background:linear-gradient(#fafafa,#e4e4e4);"></div>
<div style="left:899px;top:440px;width:7px;height:1.5px;background:#3b5ba8;"></div>
<svg style="left:897px;top:164px;" width="24" height="24" viewBox="0 0 24 24"><path d="M10.9 5 A8.7 8.7 0 1 1 3.4 9.35" stroke="#d01818" stroke-width="2.3" fill="none"/><path d="M5.8 5.3 L10.2 0.6 L11.2 11.5 Z" fill="#d01818"/></svg>
<svg style="left:894px;top:236px;" width="27" height="24" viewBox="0 0 27 24"><rect x="0" y="0" width="27" height="24" fill="#000"/><rect x="2" y="1.5" width="4.5" height="4" fill="#fff"/><rect x="2" y="10" width="4.5" height="4" fill="#fff"/><rect x="2" y="19" width="4.5" height="4" fill="#fff"/><rect x="11" y="0" width="11" height="1" fill="#fff"/><rect x="12" y="13.6" width="10" height="5.4" fill="#c8c8c8"/></svg>
<svg style="left:955px;top:332px;" width="19" height="22" viewBox="0 0 19 22"><path d="M0 0 H19 L13 6 H6 Z" fill="#1a62d0"/><rect x="8" y="5" width="3" height="16" fill="#1a62d0"/></svg>
<svg style="left:955px;top:356px;" width="19" height="22" viewBox="0 0 19 22"><path d="M0 0 H19 L13 6 H6 Z" fill="#1a62d0"/><rect x="8" y="5" width="3" height="16" fill="#1a62d0"/></svg>
<svg style="left:950px;top:404px;" width="28" height="24" viewBox="0 0 28 24"><path d="M2 8 V2 H8 M20 2 H26 V8 M26 16 V22 H20 M8 22 H2 V16" stroke="#1a62d0" stroke-width="2.6" fill="none"/><circle cx="14" cy="12" r="4.5" stroke="#1a62d0" stroke-width="2.6" fill="none"/></svg>
<div style="left:930.7px;top:168.96px;font-size:16px;line-height:16px;color:#000;font-weight:normal;font-family:'Liberation Sans',sans-serif;white-space:pre;">ReferenceVirtualAxis cCamera</div>
<div style="left:860.5px;top:192.96px;font-size:16px;line-height:16px;color:#000;font-weight:normal;font-family:'Liberation Sans',sans-serif;white-space:pre;">Signalers</div>
<div style="left:860.5px;top:216.96px;font-size:16px;line-height:16px;color:#000;font-weight:normal;font-family:'Liberation Sans',sans-serif;white-space:pre;">Feeders</div>
<div style="left:930.7px;top:240.79px;font-size:16.2px;line-height:16.2px;color:#000;font-weight:normal;font-family:'Liberation Sans',sans-serif;white-space:pre;">IndexFeeder 0670FF565457888367212340 (Slot: None)</div>
<div style="left:860.5px;top:264.96px;font-size:16px;line-height:16px;color:#000;font-weight:normal;font-family:'Liberation Sans',sans-serif;white-space:pre;">Heads</div>
<div style="left:889px;top:288.96px;font-size:16px;line-height:16px;color:#000;font-weight:normal;font-family:'Liberation Sans',sans-serif;white-space:pre;">ReferenceHead H1</div>
<div style="left:917.5px;top:312.96px;font-size:16px;line-height:16px;color:#000;font-weight:normal;font-family:'Liberation Sans',sans-serif;white-space:pre;">Nozzles</div>
<div style="left:987px;top:336.96px;font-size:16px;line-height:16px;color:#000;font-weight:normal;font-family:'Liberation Sans',sans-serif;white-space:pre;">ReferenceNozzle N1</div>
<div style="left:987px;top:360.96px;font-size:16px;line-height:16px;color:#000;font-weight:normal;font-family:'Liberation Sans',sans-serif;white-space:pre;">ReferenceNozzle N2</div>
<div style="left:917.5px;top:384.96px;font-size:16px;line-height:16px;color:#000;font-weight:normal;font-family:'Liberation Sans',sans-serif;white-space:pre;">Cameras</div>
<div style="left:985.5px;top:405px;width:219px;height:23px;background:#0078d7;"></div>
<div style="left:987px;top:408.96px;font-size:16px;line-height:16px;color:#fff;font-weight:normal;font-family:'Liberation Sans',sans-serif;white-space:pre;">OpenPnpCaptureCamera Top</div>
<div style="left:917.5px;top:432.96px;font-size:16px;line-height:16px;color:#000;font-weight:normal;font-family:'Liberation Sans',sans-serif;white-space:pre;">Actuators</div>
<div style="left:945.5px;top:456.96px;font-size:16px;line-height:16px;color:#000;font-weight:normal;font-family:'Liberation Sans',sans-serif;white-space:pre;">ReferenceActuator VAC1</div>
<div style="left:830px;top:485px;width:1318px;height:2px;background:#a0a0a0;"></div>
<div style="left:834px;top:521px;width:1310px;height:802px;border:1px solid #e3e3e3;background:#f0f0f0;"></div>
<div style="left:835px;top:522px;width:1308px;height:3px;background:#f7f7f7;"></div>
<div style="left:834px;top:493px;width:174.5px;height:29px;background:#f0f0f0;border:1px solid #e3e3e3;border-bottom:none;"></div>
<div style="left:842px;top:499.96px;font-size:16px;line-height:16px;color:#000;font-weight:normal;font-family:'Liberation Sans',sans-serif;white-space:pre;">General Configuration</div>
<div style="left:1008.5px;top:493px;width:130.5px;height:29px;background:#f0f0f0;border:1px solid #e3e3e3;border-bottom:none;"></div>
<div style="left:1016px;top:499.96px;font-size:16px;line-height:16px;color:#000;font-weight:normal;font-family:'Liberation Sans',sans-serif;white-space:pre;">Camera Settling</div>
<div style="left:1265px;top:493px;width:120px;height:29px;background:#f0f0f0;border:1px solid #e3e3e3;border-bottom:none;"></div>
<div style="left:1276px;top:499.96px;font-size:16px;line-height:16px;color:#000;font-weight:normal;font-family:'Liberation Sans',sans-serif;white-space:pre;">White Balance</div>
<div style="left:1385px;top:493px;width:72px;height:29px;background:#f0f0f0;border:1px solid #e3e3e3;border-bottom:none;"></div>
<div style="left:1392px;top:499.96px;font-size:16px;line-height:16px;color:#000;font-weight:normal;font-family:'Liberation Sans',sans-serif;white-space:pre;">Position</div>
<div style="left:1457px;top:493px;width:129px;height:29px;background:#f0f0f0;border:1px solid #e3e3e3;border-bottom:none;"></div>
<div style="left:1464px;top:499.96px;font-size:16px;line-height:16px;color:#000;font-weight:normal;font-family:'Liberation Sans',sans-serif;white-space:pre;">Lens Calibration</div>
<div style="left:1586px;top:493px;width:147px;height:29px;background:#f0f0f0;border:1px solid #e3e3e3;border-bottom:none;"></div>
<div style="left:1595px;top:499.96px;font-size:16px;line-height:16px;color:#000;font-weight:normal;font-family:'Liberation Sans',sans-serif;white-space:pre;">Image Transforms</div>
<div style="left:1733px;top:493px;width:168px;height:29px;background:#f0f0f0;border:1px solid #e3e3e3;border-bottom:none;"></div>
<div style="left:1742.5px;top:499.96px;font-size:16px;line-height:16px;color:#000;font-weight:normal;font-family:'Liberation Sans',sans-serif;white-space:pre;">Advanced Calibration</div>
<div style="left:1139px;top:490px;width:126px;height:33px;background:#f9f9f9;border:1px solid #e3e3e3;border-bottom:none;"></div>
<div style="left:1144.5px;top:496.46px;font-size:16px;line-height:16px;color:#000;font-weight:normal;font-family:'Liberation Sans',sans-serif;white-space:pre;">Device Settings</div>
<div style="left:1139.5px;top:494px;width:123px;height:25.5px;border:1.2px dotted #222;"></div>
<div style="left:2117px;top:527px;width:1px;height:745px;background:#dcdcdc;"></div>
<div style="left:2129px;top:552px;width:2.5px;height:548px;background:#7a7a7a;"></div>
<div style="left:837px;top:536px;width:1277px;height:141px;border:1px solid #dcdcdc;box-shadow:1px 1px 0 #fff inset, 1px 1px 0 #fff;"></div>
<div style="left:842px;top:532px;width:57px;height:8px;background:#f0f0f0;"></div>
<div style="left:846px;top:529.96px;font-size:16px;line-height:16px;color:#000;font-weight:normal;font-family:'Liberation Sans',sans-serif;white-space:pre;">Device</div>
<div style="right:1219px;top:566.46px;font-size:16px;line-height:16px;color:#000;font-weight:normal;font-family:'Liberation Sans',sans-serif;white-space:pre;">Device</div>
<div style="right:1219px;top:605.46px;font-size:16px;line-height:16px;color:#000;font-weight:normal;font-family:'Liberation Sans',sans-serif;white-space:pre;">Format</div>
<div style="left:851px;top:646.46px;font-size:16px;line-height:16px;color:#000;font-weight:normal;font-family:'Liberation Sans',sans-serif;white-space:pre;">Capture FPS</div>
<div style="left:951px;top:559px;width:228px;height:30px;background:#fdfdfd;border:1px solid #b9bcc2;"></div>
<div style="left:955px;top:566.46px;font-size:16px;line-height:16px;color:#000;font-weight:normal;font-family:'Liberation Sans',sans-serif;white-space:pre;">PnP Top Camera</div>
<svg style="left:1157px;top:570.0px;" width="14" height="9" viewBox="0 0 14 9"><path d="M1.5 1.5 L7 6.8 L12.5 1.5" stroke="#555" stroke-width="1.3" fill="none"/></svg>
<div style="left:951px;top:598px;width:228px;height:30px;background:#fdfdfd;border:1px solid #b9bcc2;"></div>
<div style="left:957.5px;top:605.46px;font-size:16px;line-height:16px;color:#000;font-weight:normal;font-family:'Liberation Sans',sans-serif;white-space:pre;">1280 x 720, 10 FPS, YUY2</div>
<svg style="left:1157px;top:609.0px;" width="14" height="9" viewBox="0 0 14 9"><path d="M1.5 1.5 L7 6.8 L12.5 1.5" stroke="#555" stroke-width="1.3" fill="none"/></svg>
<div style="left:951px;top:638.5px;width:228px;height:30px;background:#f0f0f0;border:1px solid #b9bcc2;"></div>
<div style="left:1190px;top:639px;width:75px;height:30px;background:#fdfdfd;border:1px solid #d5d5d5;border-bottom-color:#c4c4c4;border-radius:4px;"></div>
<div style="left:927.5px;width:600px;text-align:center;top:646.46px;font-size:16px;line-height:16px;color:#000;font-weight:normal;font-family:'Liberation Sans',sans-serif;white-space:pre;">Test</div>
<div style="left:837px;top:691px;width:1277px;height:581px;overflow:hidden;"><div style="position:absolute;left:0;top:0;width:1277px;height:700px;border:1px solid #dcdcdc;box-sizing:border-box;box-shadow:1px 1px 0 #fff inset;"></div></div>
<div style="left:842px;top:687px;width:80px;height:8px;background:#f0f0f0;"></div>
<div style="left:846.5px;top:685.96px;font-size:16px;line-height:16px;color:#000;font-weight:normal;font-family:'Liberation Sans',sans-serif;white-space:pre;">Properties</div>
<div style="left:1030px;top:718.46px;font-size:16px;line-height:16px;color:#000;font-weight:normal;font-family:'Liberation Sans',sans-serif;white-space:pre;">Auto</div>
<div style="left:1097px;top:718.46px;font-size:16px;line-height:16px;color:#000;font-weight:normal;font-family:'Liberation Sans',sans-serif;white-space:pre;">Min</div>
<div style="left:1324px;top:718.46px;font-size:16px;line-height:16px;color:#000;font-weight:normal;font-family:'Liberation Sans',sans-serif;white-space:pre;">Value</div>
<div style="left:1562.5px;top:718.46px;font-size:16px;line-height:16px;color:#000;font-weight:normal;font-family:'Liberation Sans',sans-serif;white-space:pre;">Max</div>
<div style="left:1622px;top:718.46px;font-size:16px;line-height:16px;color:#000;font-weight:normal;font-family:'Liberation Sans',sans-serif;white-space:pre;">Default</div>
<div style="right:1139.5px;top:760.46px;font-size:16px;line-height:16px;color:#000;font-weight:normal;font-family:'Liberation Sans',sans-serif;white-space:pre;">Brightness</div>
<div style="left:1036.5px;top:758.0px;width:20px;height:20px;border:1.3px solid #444;border-radius:3.5px;background:#f6f6f6;"></div>
<div style="left:1091.5px;top:760.46px;font-size:16px;line-height:16px;color:#000;font-weight:normal;font-family:'Liberation Sans',sans-serif;white-space:pre;">-128</div>
<div style="left:1165px;top:760.5px;width:280px;height:4px;background:#e6e6e6;border:1px solid #d4d4d4;border-radius:1px;"></div>
<svg style="left:1305px;top:747.5px;" width="17" height="30" viewBox="0 0 17 30"><path d="M0 0 H17 V21 L8.5 29.5 L0 21 Z" fill="#0078d7"/></svg>
<div style="left:1464.5px;top:752.5px;width:68px;height:29px;background:#fff;border:1px solid #b0b0b0;"></div>
<div style="left:1468px;top:760.46px;font-size:16px;line-height:16px;color:#000;font-weight:normal;font-family:'Liberation Sans',sans-serif;white-space:pre;">6</div>
<div style="left:1560.5px;top:760.46px;font-size:16px;line-height:16px;color:#000;font-weight:normal;font-family:'Liberation Sans',sans-serif;white-space:pre;">127</div>
<div style="left:1622.4px;top:760.46px;font-size:16px;line-height:16px;color:#000;font-weight:normal;font-family:'Liberation Sans',sans-serif;white-space:pre;">0</div>
<div style="right:1139.5px;top:815.96px;font-size:16px;line-height:16px;color:#000;font-weight:normal;font-family:'Liberation Sans',sans-serif;white-space:pre;">Backlight Compensation</div>
<div style="left:1036.5px;top:813.5px;width:20px;height:20px;border:1.3px solid #444;border-radius:3.5px;background:#f6f6f6;"></div>
<div style="left:1091px;top:815.96px;font-size:16px;line-height:16px;color:#000;font-weight:normal;font-family:'Liberation Sans',sans-serif;white-space:pre;">0</div>
<div style="left:1165px;top:816.0px;width:280px;height:4px;background:#e6e6e6;border:1px solid #d4d4d4;border-radius:1px;"></div>
<svg style="left:1157.6px;top:803.0px;" width="17" height="30" viewBox="0 0 17 30"><path d="M0 0 H17 V21 L8.5 29.5 L0 21 Z" fill="#0078d7"/></svg>
<div style="left:1464.5px;top:808.0px;width:68px;height:29px;background:#fff;border:1px solid #b0b0b0;"></div>
<div style="left:1468px;top:815.96px;font-size:16px;line-height:16px;color:#000;font-weight:normal;font-family:'Liberation Sans',sans-serif;white-space:pre;">0</div>
<div style="left:1560.5px;top:815.96px;font-size:16px;line-height:16px;color:#000;font-weight:normal;font-family:'Liberation Sans',sans-serif;white-space:pre;">2</div>
<div style="left:1622.4px;top:815.96px;font-size:16px;line-height:16px;color:#000;font-weight:normal;font-family:'Liberation Sans',sans-serif;white-space:pre;">1</div>
<div style="right:1139.5px;top:871.46px;font-size:16px;line-height:16px;color:#000;font-weight:normal;font-family:'Liberation Sans',sans-serif;white-space:pre;">Contrast</div>
<div style="left:1036.5px;top:869.0px;width:20px;height:20px;border:1.3px solid #444;border-radius:3.5px;background:#f6f6f6;"></div>
<div style="left:1091px;top:871.46px;font-size:16px;line-height:16px;color:#000;font-weight:normal;font-family:'Liberation Sans',sans-serif;white-space:pre;">0</div>
<div style="left:1165px;top:871.5px;width:280px;height:4px;background:#e6e6e6;border:1px solid #d4d4d4;border-radius:1px;"></div>
<svg style="left:1292.6px;top:858.5px;" width="17" height="30" viewBox="0 0 17 30"><path d="M0 0 H17 V21 L8.5 29.5 L0 21 Z" fill="#0078d7"/></svg>
<div style="left:1464.5px;top:863.5px;width:68px;height:29px;background:#fff;border:1px solid #b0b0b0;"></div>
<div style="left:1468px;top:871.46px;font-size:16px;line-height:16px;color:#000;font-weight:normal;font-family:'Liberation Sans',sans-serif;white-space:pre;">123</div>
<div style="left:1560.5px;top:871.46px;font-size:16px;line-height:16px;color:#000;font-weight:normal;font-family:'Liberation Sans',sans-serif;white-space:pre;">255</div>
<div style="left:1622.4px;top:871.46px;font-size:16px;line-height:16px;color:#000;font-weight:normal;font-family:'Liberation Sans',sans-serif;white-space:pre;">128</div>
<div style="right:1139.5px;top:926.96px;font-size:16px;line-height:16px;color:#000;font-weight:normal;font-family:'Liberation Sans',sans-serif;white-space:pre;">Exposure</div>
<div style="left:1038px;top:924.5px;width:20px;height:20px;border:1.3px solid #444;border-radius:3.5px;background:#f6f6f6;"></div>
<div style="left:1097px;top:926.96px;font-size:16px;line-height:16px;color:#000;font-weight:normal;font-family:'Liberation Sans',sans-serif;white-space:pre;">-13</div>
<div style="left:1165px;top:927.0px;width:280px;height:4px;background:#e6e6e6;border:1px solid #d4d4d4;border-radius:1px;"></div>
<svg style="left:1344px;top:914.0px;" width="17" height="30" viewBox="0 0 17 30"><path d="M0 0 H17 V21 L8.5 29.5 L0 21 Z" fill="#0078d7"/></svg>
<div style="left:1464.5px;top:919.0px;width:68px;height:29px;background:#fff;border:1px solid #b0b0b0;"></div>
<div style="left:1468px;top:926.96px;font-size:16px;line-height:16px;color:#000;font-weight:normal;font-family:'Liberation Sans',sans-serif;white-space:pre;">-5</div>
<div style="left:1570px;top:926.96px;font-size:16px;line-height:16px;color:#000;font-weight:normal;font-family:'Liberation Sans',sans-serif;white-space:pre;">-1</div>
<div style="left:1622.4px;top:926.96px;font-size:16px;line-height:16px;color:#000;font-weight:normal;font-family:'Liberation Sans',sans-serif;white-space:pre;">-4</div>
<div style="right:1139.5px;top:982.46px;font-size:16px;line-height:16px;color:#8a8a8a;font-weight:normal;font-family:'Liberation Sans',sans-serif;white-space:pre;">Focus</div>
<div style="left:1038px;top:980.0px;width:20px;height:20px;border:1px solid #d8d8d8;border-radius:3px;background:#f7f7f7;"></div>
<div style="left:1104.8px;top:982.46px;font-size:16px;line-height:16px;color:#000;font-weight:normal;font-family:'Liberation Sans',sans-serif;white-space:pre;">0</div>
<div style="left:1165px;top:982.5px;width:280px;height:4px;background:#e6e6e6;border:1px solid #d4d4d4;border-radius:1px;"></div>
<svg style="left:1157.6px;top:969.5px;" width="17" height="30" viewBox="0 0 17 30"><path d="M0 0 H17 V21 L8.5 29.5 L0 21 Z" fill="#c6c6c6"/></svg>
<div style="left:1464.5px;top:974.5px;width:68px;height:29px;background:#f0f0f0;border:1px solid #b0b0b0;"></div>
<div style="left:1468px;top:982.46px;font-size:16px;line-height:16px;color:#8a8a8a;font-weight:normal;font-family:'Liberation Sans',sans-serif;white-space:pre;">0</div>
<div style="left:1572.7px;top:982.46px;font-size:16px;line-height:16px;color:#000;font-weight:normal;font-family:'Liberation Sans',sans-serif;white-space:pre;">0</div>
<div style="left:1622.4px;top:982.46px;font-size:16px;line-height:16px;color:#000;font-weight:normal;font-family:'Liberation Sans',sans-serif;white-space:pre;">0</div>
<div style="right:1139.5px;top:1037.96px;font-size:16px;line-height:16px;color:#000;font-weight:normal;font-family:'Liberation Sans',sans-serif;white-space:pre;">Gain</div>
<div style="left:1038px;top:1035.5px;width:20px;height:20px;border:1.3px solid #444;border-radius:3.5px;background:#f6f6f6;"></div>
<div style="left:1104.8px;top:1037.96px;font-size:16px;line-height:16px;color:#000;font-weight:normal;font-family:'Liberation Sans',sans-serif;white-space:pre;">0</div>
<div style="left:1165px;top:1038.0px;width:280px;height:4px;background:#e6e6e6;border:1px solid #d4d4d4;border-radius:1px;"></div>
<svg style="left:1157.6px;top:1025.0px;" width="17" height="30" viewBox="0 0 17 30"><path d="M0 0 H17 V21 L8.5 29.5 L0 21 Z" fill="#0078d7"/></svg>
<div style="left:1464.5px;top:1030.0px;width:68px;height:29px;background:#fff;border:1px solid #b0b0b0;"></div>
<div style="left:1468px;top:1037.96px;font-size:16px;line-height:16px;color:#000;font-weight:normal;font-family:'Liberation Sans',sans-serif;white-space:pre;">0</div>
<div style="left:1565.6px;top:1037.96px;font-size:16px;line-height:16px;color:#000;font-weight:normal;font-family:'Liberation Sans',sans-serif;white-space:pre;">100</div>
<div style="left:1622.4px;top:1037.96px;font-size:16px;line-height:16px;color:#000;font-weight:normal;font-family:'Liberation Sans',sans-serif;white-space:pre;">0</div>
<div style="right:1139.5px;top:1093.46px;font-size:16px;line-height:16px;color:#000;font-weight:normal;font-family:'Liberation Sans',sans-serif;white-space:pre;">Gamma</div>
<div style="left:1037px;top:1091.0px;width:20px;height:20px;border:1.3px solid #444;border-radius:3.5px;background:#f6f6f6;"></div>
<div style="left:1092px;top:1093.46px;font-size:16px;line-height:16px;color:#000;font-weight:normal;font-family:'Liberation Sans',sans-serif;white-space:pre;">72</div>
<div style="left:1165px;top:1093.5px;width:280px;height:4px;background:#e6e6e6;border:1px solid #d4d4d4;border-radius:1px;"></div>
<svg style="left:1157.6px;top:1080.5px;" width="17" height="30" viewBox="0 0 17 30"><path d="M0 0 H17 V21 L8.5 29.5 L0 21 Z" fill="#0078d7"/></svg>
<div style="left:1464.5px;top:1085.5px;width:68px;height:29px;background:#fff;border:1px solid #b0b0b0;"></div>
<div style="left:1468px;top:1093.46px;font-size:16px;line-height:16px;color:#000;font-weight:normal;font-family:'Liberation Sans',sans-serif;white-space:pre;">72</div>
<div style="left:1560px;top:1093.46px;font-size:16px;line-height:16px;color:#000;font-weight:normal;font-family:'Liberation Sans',sans-serif;white-space:pre;">500</div>
<div style="left:1622.4px;top:1093.46px;font-size:16px;line-height:16px;color:#000;font-weight:normal;font-family:'Liberation Sans',sans-serif;white-space:pre;">100</div>
<div style="right:1139.5px;top:1148.96px;font-size:16px;line-height:16px;color:#000;font-weight:normal;font-family:'Liberation Sans',sans-serif;white-space:pre;">Hue</div>
<div style="left:1037px;top:1146.5px;width:20px;height:20px;border:1.3px solid #444;border-radius:3.5px;background:#f6f6f6;"></div>
<div style="left:1092px;top:1148.96px;font-size:16px;line-height:16px;color:#000;font-weight:normal;font-family:'Liberation Sans',sans-serif;white-space:pre;">-40</div>
<div style="left:1165px;top:1149.0px;width:280px;height:4px;background:#e6e6e6;border:1px solid #d4d4d4;border-radius:1px;"></div>
<svg style="left:1284.2px;top:1136.0px;" width="17" height="30" viewBox="0 0 17 30"><path d="M0 0 H17 V21 L8.5 29.5 L0 21 Z" fill="#0078d7"/></svg>
<div style="left:1464.5px;top:1141.0px;width:68px;height:29px;background:#fff;border:1px solid #b0b0b0;"></div>
<div style="left:1468px;top:1148.96px;font-size:16px;line-height:16px;color:#000;font-weight:normal;font-family:'Liberation Sans',sans-serif;white-space:pre;">-4</div>
<div style="left:1560px;top:1148.96px;font-size:16px;line-height:16px;color:#000;font-weight:normal;font-family:'Liberation Sans',sans-serif;white-space:pre;">40</div>
<div style="left:1622.4px;top:1148.96px;font-size:16px;line-height:16px;color:#000;font-weight:normal;font-family:'Liberation Sans',sans-serif;white-space:pre;">0</div>
<div style="right:1139.5px;top:1204.46px;font-size:16px;line-height:16px;color:#000;font-weight:normal;font-family:'Liberation Sans',sans-serif;white-space:pre;">Power Line Freq.</div>
<div style="left:1037px;top:1202.0px;width:20px;height:20px;border:1.3px solid #444;border-radius:3.5px;background:#f6f6f6;"></div>
<div style="left:1091px;top:1204.46px;font-size:16px;line-height:16px;color:#000;font-weight:normal;font-family:'Liberation Sans',sans-serif;white-space:pre;">0</div>
<div style="left:1165px;top:1204.5px;width:280px;height:4px;background:#e6e6e6;border:1px solid #d4d4d4;border-radius:1px;"></div>
<svg style="left:1297.7px;top:1191.5px;" width="17" height="30" viewBox="0 0 17 30"><path d="M0 0 H17 V21 L8.5 29.5 L0 21 Z" fill="#0078d7"/></svg>
<div style="left:1464.5px;top:1196.5px;width:68px;height:29px;background:#fff;border:1px solid #b0b0b0;"></div>
<div style="left:1468px;top:1204.46px;font-size:16px;line-height:16px;color:#000;font-weight:normal;font-family:'Liberation Sans',sans-serif;white-space:pre;">1</div>
<div style="left:1560px;top:1204.46px;font-size:16px;line-height:16px;color:#000;font-weight:normal;font-family:'Liberation Sans',sans-serif;white-space:pre;">2</div>
<div style="left:1622.4px;top:1204.46px;font-size:16px;line-height:16px;color:#000;font-weight:normal;font-family:'Liberation Sans',sans-serif;white-space:pre;">1</div>
<div style="right:1139.5px;top:1259.96px;font-size:16px;line-height:16px;color:#000;font-weight:normal;font-family:'Liberation Sans',sans-serif;white-space:pre;">Saturation</div>
<div style="left:1037px;top:1257.5px;width:20px;height:20px;border:1.3px solid #444;border-radius:3.5px;background:#f6f6f6;"></div>
<div style="left:1093px;top:1259.96px;font-size:16px;line-height:16px;color:#000;font-weight:normal;font-family:'Liberation Sans',sans-serif;white-space:pre;">1</div>
<div style="left:1165px;top:1260.0px;width:280px;height:4px;background:#e6e6e6;border:1px solid #d4d4d4;border-radius:1px;"></div>
<svg style="left:1157.6px;top:1247.0px;" width="17" height="30" viewBox="0 0 17 30"><path d="M0 0 H17 V21 L8.5 29.5 L0 21 Z" fill="#0078d7"/></svg>
<div style="left:1464.5px;top:1252.0px;width:68px;height:29px;background:#fff;border:1px solid #b0b0b0;"></div>
<div style="left:1468px;top:1259.96px;font-size:16px;line-height:16px;color:#000;font-weight:normal;font-family:'Liberation Sans',sans-serif;white-space:pre;">1</div>
<div style="left:1560.5px;top:1259.96px;font-size:16px;line-height:16px;color:#000;font-weight:normal;font-family:'Liberation Sans',sans-serif;white-space:pre;">128</div>
<div style="left:1622.4px;top:1259.96px;font-size:16px;line-height:16px;color:#000;font-weight:normal;font-family:'Liberation Sans',sans-serif;white-space:pre;">64</div>
<div style="left:835px;top:1271.5px;width:1280px;height:40px;background:#f0f0f0;"></div>
<div style="left:1950px;top:1282px;width:85.5px;height:28.5px;background:#f7f7f7;border:1px solid #e9e9e9;border-radius:4px;"></div>
<div style="left:2049px;top:1282px;width:82.5px;height:28.5px;background:#f7f7f7;border:1px solid #e9e9e9;border-radius:4px;"></div>
<div style="left:1692.7px;width:600px;text-align:center;top:1289.46px;font-size:16px;line-height:16px;color:#8a8a8a;font-weight:normal;font-family:'Liberation Sans',sans-serif;white-space:pre;">Reset</div>
<div style="left:1790.1999999999998px;width:600px;text-align:center;top:1289.46px;font-size:16px;line-height:16px;color:#8a8a8a;font-weight:normal;font-family:'Liberation Sans',sans-serif;white-space:pre;">Apply</div>
<div style="left:9px;top:1333.5px;width:893px;height:26.5px;background:#f0f0f0;border-top:2px solid #a0a0a0;border-left:2px solid #a0a0a0;border-right:2px solid #ffffff;border-bottom:2px solid #ffffff;"></div>
<div style="left:924px;top:1333px;width:341px;height:27px;background:#f0f0f0;border-top:2px solid #a0a0a0;border-left:2px solid #a0a0a0;border-right:2px solid #ffffff;border-bottom:2px solid #ffffff;"></div>
<div style="left:930px;top:1338.96px;font-size:16px;line-height:16px;color:#000;font-weight:normal;font-family:'Liberation Sans',sans-serif;white-space:pre;">Placements: 0 / 0 Total | 0 / 0 Selected Board</div>
<div style="left:1273px;top:1335px;width:300px;height:22px;background:#e6e6e6;border:1px solid #bcbcbc;"></div>
<div style="left:1274px;top:1336px;width:3px;height:20px;background:#0078d7;"></div>
<div style="left:1122px;width:600px;text-align:center;top:1336.3px;font-size:15px;line-height:15px;color:#2a7fd8;font-weight:normal;font-family:'Liberation Sans',sans-serif;white-space:pre;">0%</div>
<div style="left:1583px;top:1331.5px;width:570px;height:30px;background:#bbffbb;border-top:2.5px solid #5f875f;border-left:2px solid #5f875f;border-right:3px solid #fff;border-bottom:3px solid #fff;"></div>
<div style="left:1585px;top:1338.57px;font-size:20px;line-height:20px;color:#1c1c1c;font-weight:normal;font-family:'Liberation Mono',monospace;white-space:pre;">X:216.145   Y:164.374   Z:0.000     C:0.000</div>
<div style="left:0px;top:1367.5px;width:2160px;height:2px;background:#0b2a55;"></div>
<div style="left:0px;top:1356px;width:10px;height:10px;background:radial-gradient(circle at 100% 0%, transparent 9px, #0b2a55 10px);"></div>
<div style="left:2148px;top:1354px;width:12px;height:14px;background:radial-gradient(circle at 0% 0%, transparent 11px, #1a6ad0 12px);"></div>
<svg style="left:0px;top:0px;" width="2160" height="1369" viewBox="0 0 2160 1369"><rect x="1133.5" y="465.5" width="140" height="84" rx="3.5" ry="3.5" stroke="#ff0000" stroke-width="11" fill="none"/>
<polygon points="1279.9,587.8 1343.4,614.4 1326.2,620.7 1776,1010.4 1768.8,1019 1318.2,629.1 1314.6,647.3" fill="#ff0000"/></svg>
<svg style="left:1200px;top:506px;" width="24" height="32" viewBox="0 0 24 32"><path d="M2.5 2.5 L2.5 25 L8 19.5 L12 28 L15.5 26.5 L11.5 18.5 L19 18.5 Z" fill="#fff" stroke="#000" stroke-width="1.2" stroke-linejoin="round"/></svg>
</div></body></html>
